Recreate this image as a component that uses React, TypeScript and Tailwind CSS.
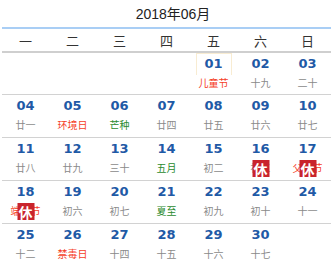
import React from "react";

type Cell = {
  d?: string;
  l?: string;
  c?: "gray" | "red" | "green";
  rest?: boolean;
  today?: boolean;
};

const rows: Cell[][] = [
  [
    {}, {}, {}, {},
    { d: "01", l: "儿童节", c: "red", today: true },
    { d: "02", l: "十九" },
    { d: "03", l: "二十" },
  ],
  [
    { d: "04", l: "廿一" },
    { d: "05", l: "环境日", c: "red" },
    { d: "06", l: "芒种", c: "green" },
    { d: "07", l: "廿四" },
    { d: "08", l: "廿五" },
    { d: "09", l: "廿六" },
    { d: "10", l: "廿七" },
  ],
  [
    { d: "11", l: "廿八" },
    { d: "12", l: "廿九" },
    { d: "13", l: "三十" },
    { d: "14", l: "五月", c: "green" },
    { d: "15", l: "初二" },
    { d: "16", l: "初三", rest: true },
    { d: "17", l: "父亲节", c: "red", rest: true },
  ],
  [
    { d: "18", l: "端午节", c: "red", rest: true },
    { d: "19", l: "初六" },
    { d: "20", l: "初七" },
    { d: "21", l: "夏至", c: "green" },
    { d: "22", l: "初九" },
    { d: "23", l: "初十" },
    { d: "24", l: "十一" },
  ],
  [
    { d: "25", l: "十二" },
    { d: "26", l: "禁毒日", c: "red" },
    { d: "27", l: "十四" },
    { d: "28", l: "十五" },
    { d: "29", l: "十六" },
    { d: "30", l: "十七" },
    {},
  ],
];

const weekdays = ["一", "二", "三", "四", "五", "六", "日"];

function DayCell({ cell }: { cell: Cell }) {
  if (!cell.d) return <div />;
  const color =
    cell.c === "red"
      ? "text-[#f5401f]"
      : cell.c === "green"
      ? "text-[#2a8a2e]"
      : "text-[#8a8a8a]";
  return (
    <div className="relative flex flex-col items-center pt-[2px]">
      <div className="relative flex h-[18px] items-center justify-center">
        {cell.today && (
          <div className="absolute left-1/2 top-[-2px] h-[22px] w-[36px] -translate-x-1/2 border border-b-0 border-[#f8ecd2]" />
        )}
        <span className="relative font-['DejaVu_Sans',sans-serif] text-[13px] font-bold leading-[18px] text-[#1f5aa6]">
          {cell.d}
        </span>
      </div>
      <div
        className={`mt-[3px] h-[14px] text-[10px] leading-[14px] ${color} font-['Noto_Sans_CJK_SC',sans-serif]`}
      >
        {cell.l}
      </div>
      {cell.rest && (
        <div className="absolute left-1/2 top-[22px] flex h-[17px] w-[17px] -translate-x-1/2 items-center justify-center bg-[#c9242c] font-['Noto_Sans_CJK_SC',sans-serif] text-[14px] font-bold leading-none text-white">
          休
        </div>
      )}
    </div>
  );
}

export default function App() {
  return (
    <div className="h-[278px] w-[333px] overflow-hidden bg-white font-['Noto_Sans_CJK_SC',sans-serif]">
      <div className="flex h-[27px] items-center justify-center pl-[13px] pt-[1px] font-['Liberation_Sans','Noto_Sans_CJK_SC',sans-serif] text-[14px] text-[#222]">
        2018年06月
      </div>
      <div className="mx-[2px] h-[2px] bg-[#a9cef5]" />
      <div className="grid h-[22px] grid-cols-7 items-center px-[2px] text-[13px] text-[#333]">
        {weekdays.map((w) => (
          <div key={w} className="text-center leading-none">
            {w}
          </div>
        ))}
      </div>
      <div className="mx-[2px] h-[2px] bg-[#cfcfcf]" />
      {rows.map((r, i) => (
        <div
          key={i}
          className={`mx-[2px] grid grid-cols-7 ${
            i === 0 ? "h-[42px]" : "h-[43px]"
          } ${i < rows.length - 1 ? "border-b border-[#d2d2d2]" : ""}`}
        >
          {r.map((c, j) => (
            <DayCell key={j} cell={c} />
          ))}
        </div>
      ))}
    </div>
  );
}
